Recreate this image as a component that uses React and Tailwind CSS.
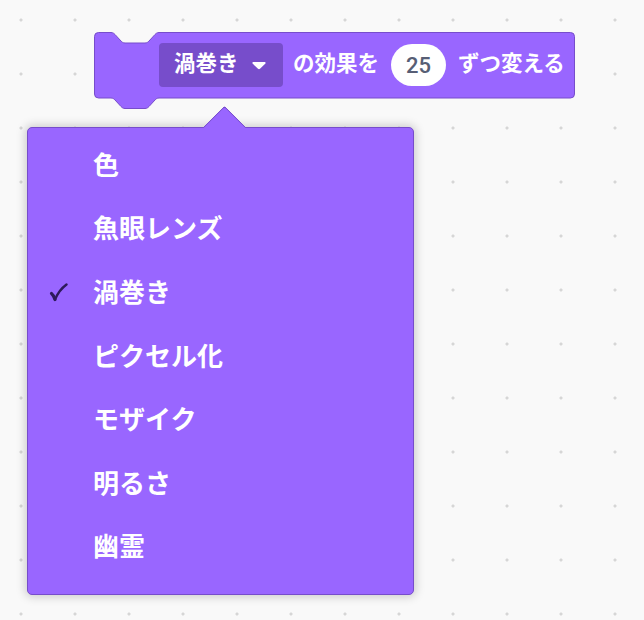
import React from 'react'

const items = ['色', '魚眼レンズ', '渦巻き', 'ピクセル化', 'モザイク', '明るさ', '幽霊']
const selected = '渦巻き'

const jp = { fontFamily: '"Liberation Sans", "Noto Sans CJK JP", sans-serif' }

function BlockShape() {
  return (
    <svg className="absolute left-0 top-0 overflow-visible" width="481" height="77" viewBox="0 0 481 77">
      <path
        d="M0.5,4.5 A4,4 0 0 1 4.5,0.5 H17 C19,0.5 20,1.5 21,2.5 L27,9 C28,10 29,11 31,11 H51 C53,11 54,10 55,9 L61,2.5 C62,1.5 63,0.5 65,0.5 H476.5 A4,4 0 0 1 480.5,4.5 V62 A4,4 0 0 1 476.5,66 H65 C63,66 62,67 61,68 L55,74.5 C54,75.5 53,76.5 51,76.5 H31 C29,76.5 28,75.5 27,74.5 L21,68 C20,67 19,66 17,66 H4.5 A4,4 0 0 1 0.5,62 Z"
        fill="#9966FF"
        stroke="#774DCB"
        strokeWidth="1"
      />
    </svg>
  )
}

function Check() {
  return (
    <svg width="20" height="20" viewBox="0 0 20 20">
      <path d="M2.5,10.5 Q4.5,12 6,16.5" stroke="#2E1A5A" strokeWidth="3.2" strokeLinecap="round" fill="none" />
      <path d="M6,16.5 Q10,7 17.5,1.5" stroke="#2E1A5A" strokeWidth="2.4" strokeLinecap="round" fill="none" />
    </svg>
  )
}

export default function App() {
  return (
    <div
      className="w-[644px] h-[620px] overflow-hidden bg-[#F9F9F9] bg-[radial-gradient(circle,#d6d6d6_1.3px,transparent_1.8px)] bg-[length:54px_54px] bg-[position:-6px_-7px]"
      style={jp}
    >
      <div className="pt-[32px] pl-[94px]">
        <div className="relative w-[481px] h-[67px]">
          <BlockShape />
          <div className="relative flex items-center h-[66px] pl-[65px] text-white font-bold text-[21.5px]">
            <div className="flex items-center h-[44px] w-[124px] rounded-[4px] bg-[#774DCB] pl-[15px]">
              <span className="leading-none">渦巻き</span>
              <svg className="ml-[13px]" width="14" height="9" viewBox="0 0 14 9">
                <path d="M1.5,1 H12.5 C13.5,1 14,2 13.2,2.8 L8,7.8 C7.4,8.4 6.6,8.4 6,7.8 L0.8,2.8 C0,2 0.5,1 1.5,1 Z" fill="#fff" />
              </svg>
            </div>
            <span className="ml-[10px] leading-none">の効果を</span>
            <div
              className="ml-[12px] flex items-center justify-center w-[55px] h-[42px] rounded-full bg-white text-[#575E75] text-[22px] font-medium"
              style={{ fontFamily: 'Roboto, "Liberation Sans", sans-serif' }}
            >
              25
            </div>
            <span className="ml-[12px] leading-none">ずつ変える</span>
          </div>
        </div>
      </div>

      <div className="ml-[27px] mt-[28px] relative w-[387px] h-[468px] rounded-[5px] border border-[#774DCB] bg-[#9966FF] shadow-[0_0_10px_2px_rgba(0,0,0,0.18)]">
        <div className="absolute left-[181px] top-[-16px] w-[31px] h-[31px] rotate-45 rounded-tl-[3px] bg-[#9966FF] border-t border-l border-[#774DCB]" />
        <div className="relative pt-[6px]">
          {items.map(it => (
            <div key={it} className="flex items-center h-[63.6px]">
              <div className="w-[65px] pl-[21px] flex items-center">
                {it === selected && <Check />}
              </div>
              <span className="text-white font-bold text-[26px] leading-none">{it}</span>
            </div>
          ))}
        </div>
      </div>
    </div>
  )
}
